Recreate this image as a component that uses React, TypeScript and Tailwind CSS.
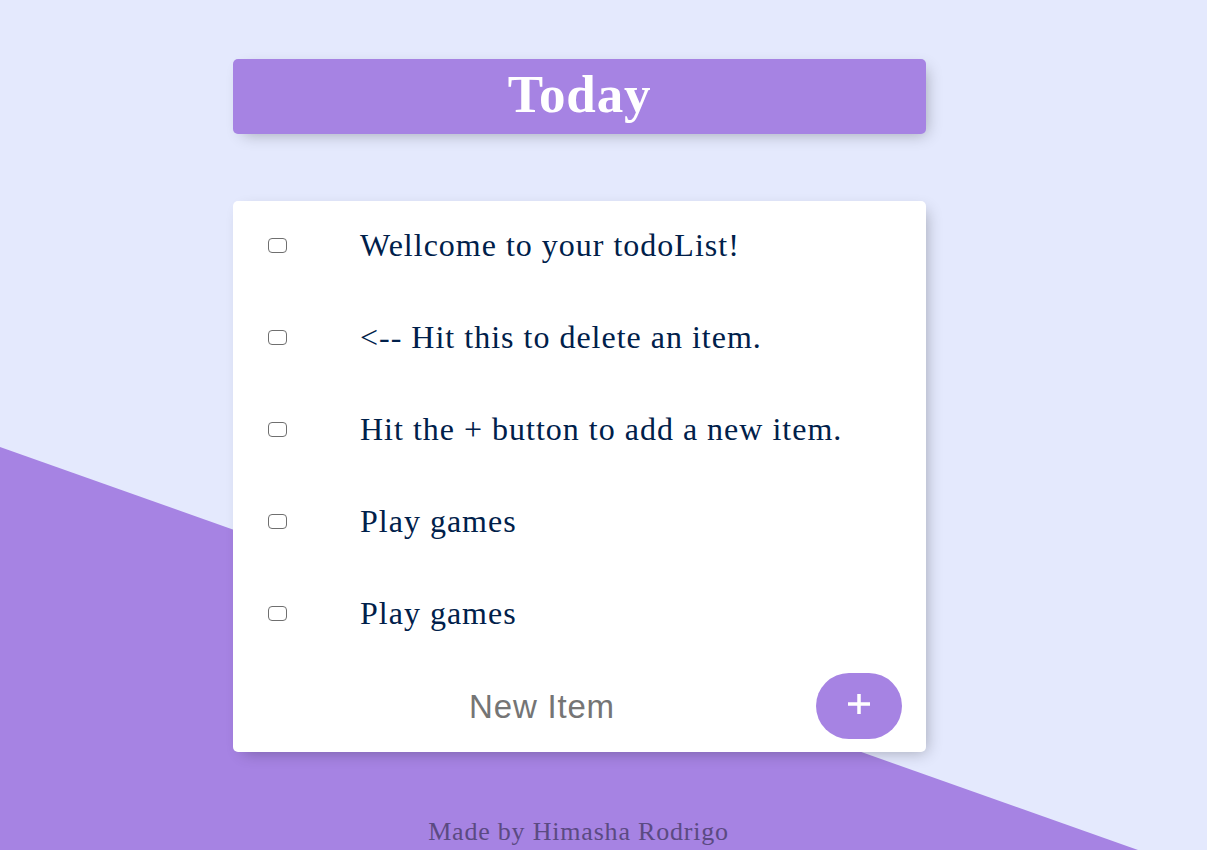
import React from 'react'

const items = [
  'Wellcome to your todoList!',
  '<-- Hit this to delete an item.',
  'Hit the + button to add a new item.',
  'Play games',
  'Play games',
]

const App: React.FC = () => {
  return (
    <div className="relative h-[850px] overflow-hidden bg-[#e4e9fd]">
      {/* diagonal purple band */}
      <svg
        className="absolute inset-0 w-full h-full"
        viewBox="0 0 1207 850"
        preserveAspectRatio="none"
      >
        <polygon points="0,447 1138,850 0,850" fill="#a683e3" />
      </svg>

      <div className="relative ml-[233px] w-[693px] pt-[59px]">
        <div className="h-[75px] rounded-[5px] bg-[#a683e3] shadow-[5px_5px_15px_-5px_rgba(0,0,0,0.3)] flex items-center justify-center">
          <h1 className="text-white font-bold text-[53px] leading-none font-['Liberation_Serif',serif] tracking-[0.8px] pb-[4px]">
            Today
          </h1>
        </div>

        <div className="mt-[67px] bg-white rounded-[5px] shadow-[5px_5px_15px_-5px_rgba(0,0,0,0.3)]">
          {items.map((text, i) => (
            <div key={i} className="h-[92px] flex items-center pl-[35px]">
              <span className="w-[19px] h-[15px] border-[1.5px] border-[#6f6f6f] rounded-[4px] shrink-0 -mt-[3px]" />
              <p className="ml-[73px] text-[#00204a] text-[32px] leading-none tracking-[1px] font-['Liberation_Serif',serif] -mt-[4px]">
                {text}
              </p>
            </div>
          ))}

          <form
            className="h-[91px] flex items-center pl-[35px] pr-[24px]"
            onSubmit={(e) => e.preventDefault()}
          >
            <input
              type="text"
              placeholder="New Item"
              className="flex-1 text-center bg-transparent outline-none text-[33px] tracking-[0.8px] font-['Liberation_Sans',sans-serif] placeholder:text-[#757575] text-[#00204a]"
            />
            <button
              type="submit"
              className="w-[86px] h-[66px] rounded-full bg-[#a683e3] flex items-center justify-center shrink-0 -mt-[2px]"
            >
              <svg width="26" height="22" viewBox="0 0 26 22" className="-mt-[4px]">
                <path d="M13 1v20M2 11h22" stroke="white" strokeWidth="3.5" />
              </svg>
            </button>
          </form>
        </div>

        <footer className="mt-[60px] text-center text-[#5b4a82] text-[26px] tracking-[0.8px] font-['Liberation_Serif',serif] -ml-[2px]">
          Made by Himasha Rodrigo
        </footer>
      </div>
    </div>
  )
}

export default App
